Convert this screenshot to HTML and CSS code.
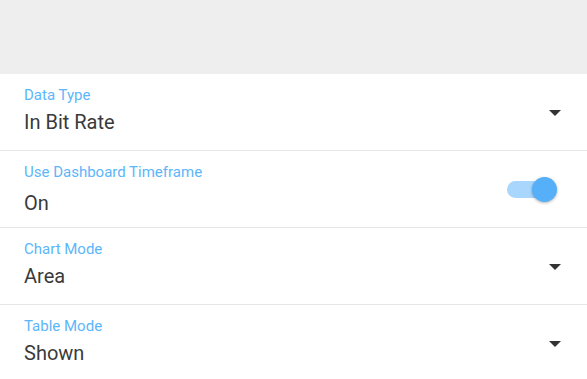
FILE: index.html
```html
<!DOCTYPE html>
<html lang="en">
<head>
    <meta charset="UTF-8">
    <meta name="viewport" content="width=device-width, initial-scale=1.0">
    <title>Widget Settings</title>
    <link rel="stylesheet" href="styles.css">
</head>
<body>
    <header class="top-bar"></header>
    <main class="settings">
        <div class="field">
            <div class="field-text">
                <div class="field-label">Data Type</div>
                <div class="field-value">In Bit Rate</div>
            </div>
            <span class="arrow"></span>
        </div>
        <div class="field">
            <div class="field-text">
                <div class="field-label">Use Dashboard Timeframe</div>
                <div class="field-value spaced">On</div>
            </div>
            <div class="switch on">
                <span class="track"></span>
                <span class="thumb"></span>
            </div>
        </div>
        <div class="field">
            <div class="field-text">
                <div class="field-label">Chart Mode</div>
                <div class="field-value">Area</div>
            </div>
            <span class="arrow"></span>
        </div>
        <div class="field">
            <div class="field-text">
                <div class="field-label">Table Mode</div>
                <div class="field-value">Shown</div>
            </div>
            <span class="arrow"></span>
        </div>
    </main>
</body>
</html>
```

FILE: styles.css
```css
body {
    font-family: Roboto, 'Noto Sans', sans-serif;
    background-color: #fff;
    margin: 0;
    padding: 0;
}

.top-bar {
    height: 74px;
    background-color: #eeeeee;
}

.field {
    height: 76px;
    padding: 0 26px 0 24px;
    border-bottom: 1px solid #e6e6e6;
    display: flex;
    align-items: center;
    justify-content: space-between;
}

.field-text {
    align-self: flex-start;
    padding-top: 13px;
}

.field-label {
    font-size: 15px;
    line-height: 16px;
    color: #5cb6fa;
}

.field-value {
    font-size: 20px;
    line-height: 24px;
    color: #3a3a3a;
    margin-top: 7px;
}

.field-value.spaced {
    margin-top: 11px;
}

.arrow {
    width: 0;
    height: 0;
    border-left: 6px solid transparent;
    border-right: 6px solid transparent;
    border-top: 6px solid #333;
    margin-top: 2px;
}

.switch {
    position: relative;
    width: 50px;
    height: 25px;
    margin-right: 4px;
}

.switch .track {
    position: absolute;
    left: 0;
    top: 4px;
    width: 40px;
    height: 17px;
    border-radius: 9px;
    background-color: #a8d6fc;
}

.switch .thumb {
    position: absolute;
    right: 0;
    top: 0;
    width: 25px;
    height: 25px;
    border-radius: 50%;
    background-color: #55aff9;
    box-shadow: 0 1px 3px rgba(0, 0, 0, 0.3);
}
```
